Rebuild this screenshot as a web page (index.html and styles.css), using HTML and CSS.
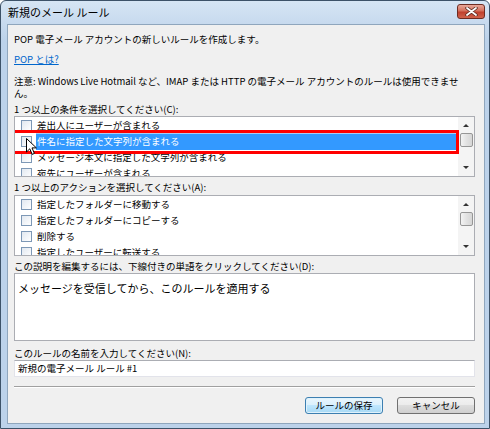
FILE: index.html
```html
<!DOCTYPE html>
<html lang="ja">

<head>
  <meta charset="UTF-8">
  <meta name="viewport" content="width=device-width, initial-scale=1.0">
  <title>新規のメール ルール</title>

  <link rel="stylesheet" href="styles.css">
</head>

<body>
  <div class="window">
    <!-- タイトルバー -->
    <div class="titlebar">
      <span class="title">新規のメール ルール</span>
      <span class="close">
        <svg width="13" height="9" viewBox="0 0 13 9">
          <path d="M2 1 L11 8 M11 1 L2 8" stroke="#5a2a20" stroke-width="3.4" stroke-linecap="round" />
          <path d="M2 1 L11 8 M11 1 L2 8" stroke="#ffffff" stroke-width="1.8" stroke-linecap="round" />
        </svg>
      </span>
    </div>

    <div class="client">
      <p class="intro">POP 電子メール アカウントの新しいルールを作成します。</p>
      <p class="help"><a href="#">POP とは?</a></p>
      <p class="note">注意: Windows Live Hotmail など、IMAP または HTTP の電子メール アカウントのルールは使用できません。</p>

      <!-- 条件 -->
      <div class="label">1 つ以上の条件を選択してください(C):</div>
      <div class="listbox conditions">
        <ul class="items">
          <li><span class="check"></span><span class="text">差出人にユーザーが含まれる</span></li>
          <li class="selected"><span class="check"></span><span class="text">件名に指定した文字列が含まれる</span></li>
          <li><span class="check"></span><span class="text">メッセージ本文に指定した文字列が含まれる</span></li>
          <li><span class="check"></span><span class="text">宛先にユーザーが含まれる</span></li>
        </ul>
        <div class="scrollbar">
          <span class="arrow up"></span>
          <span class="thumb"></span>
          <span class="arrow down"></span>
        </div>
        <span class="mark"></span>
        <svg class="cursor" width="12" height="18" viewBox="0 0 12 18">
          <path d="M0.5 0.5 L0.5 14 L3.8 10.8 L6.2 16.4 L8.4 15.4 L6 9.9 L10.4 9.9 Z" fill="#ffffff" stroke="#000000" stroke-width="1" />
        </svg>
      </div>

      <!-- アクション -->
      <div class="label">1 つ以上のアクションを選択してください(A):</div>
      <div class="listbox actions">
        <ul class="items">
          <li><span class="check"></span><span class="text">指定したフォルダーに移動する</span></li>
          <li><span class="check"></span><span class="text">指定したフォルダーにコピーする</span></li>
          <li><span class="check"></span><span class="text">削除する</span></li>
          <li><span class="check"></span><span class="text">指定したユーザーに転送する</span></li>
        </ul>
        <div class="scrollbar">
          <span class="arrow up"></span>
          <span class="thumb"></span>
          <span class="arrow down"></span>
        </div>
      </div>

      <!-- 説明 -->
      <div class="label">この説明を編集するには、下線付きの単語をクリックしてください(D):</div>
      <div class="desc">メッセージを受信してから、このルールを適用する</div>

      <!-- ルール名 -->
      <div class="label">このルールの名前を入力してください(N):</div>
      <div class="name">新規の電子メール ルール #1</div>

      <hr class="sep">

      <div class="buttons">
        <button class="btn default">ルールの保存</button>
        <button class="btn">キャンセル</button>
      </div>
    </div>
  </div>
</body>

</html>
```

FILE: styles.css
```css
* {
  margin: 0;
  padding: 0;
  box-sizing: border-box;
}

body {
  width: 490px;
  height: 429px;
  overflow: hidden;
  font-family: "Noto Sans CJK JP", "Noto Sans", sans-serif;
  font-size: 9.5px;
  color: #000000;
}

/* ウィンドウ枠 */
.window {
  display: flex;
  flex-direction: column;
  width: 490px;
  height: 429px;
  padding: 0 4px 4px 6px;
  border: 1px solid #3d5268;
  border-radius: 6px 6px 0 0;
  background: linear-gradient(#d6e5f4, #bcd2ea 40px, #bcd2ea);
}

.titlebar {
  display: flex;
  align-items: center;
  justify-content: space-between;
  height: 23px;
  padding-left: 1px;
}

.title {
  font-size: 11px;
  line-height: 23px;
}

.close {
  display: flex;
  align-items: center;
  justify-content: center;
  width: 28px;
  height: 15px;
  margin-top: -3px;
  border: 1px solid #6e2c22;
  border-radius: 3px;
  background: linear-gradient(#e9a899, #d4705c 45%, #c0412e 55%, #d0634c);
}

.client {
  flex: 1;
  padding: 8px 9px 0 6px;
  border: 1px solid #8fa6bd;
  background: #f0f0f0;
}

p,
.label {
  line-height: 12px;
}

.help {
  margin-top: 8px;
}

.help a {
  color: #0066cc;
}

.note {
  margin-top: 10px;
  padding-right: 8px;
}

.label {
  margin-top: 4px;
}

/* リストボックス */
.listbox {
  position: relative;
  display: flex;
  height: 61px;
  margin-top: 1px;
  border: 1px solid #abadb3;
  background: #ffffff;
  overflow: hidden;
}

.actions {
  margin-top: 2px;
}

.items {
  flex: 1;
  list-style: none;
}

.items li {
  display: flex;
  align-items: center;
  height: 16px;
  padding-left: 6px;
}

.check {
  width: 11px;
  height: 11px;
  margin-right: 4px;
  border: 1px solid #7d98b6;
  background: linear-gradient(135deg, #e1e8f0, #ffffff);
}

.text {
  flex: 1;
  height: 16px;
  padding-left: 1px;
  line-height: 16px;
  white-space: nowrap;
}

.selected .text {
  height: 17px;
  border-top: 1px solid #a6cdf5;
  background: #3399ff;
  color: #ffffff;
  line-height: 15px;
}

.scrollbar {
  display: flex;
  flex-direction: column;
  align-items: center;
  width: 16px;
  background: #f4f4f4;
}

.arrow {
  width: 0;
  height: 0;
  border-left: 3px solid transparent;
  border-right: 3px solid transparent;
}

.arrow.up {
  margin-top: 7px;
  border-bottom: 3px solid #333333;
}

.arrow.down {
  margin-top: auto;
  margin-bottom: 7px;
  border-top: 3px solid #333333;
}

.thumb {
  width: 13px;
  height: 14px;
  margin-top: 6px;
  border: 1px solid #969696;
  border-radius: 2px;
  background: linear-gradient(90deg, #f3f3f3, #e2e2e2 50%, #d6d6d6);
}

/* 選択行の赤枠 */
.mark {
  position: absolute;
  left: -5px;
  top: 13px;
  width: 449px;
  height: 24px;
  border: 3px solid #ff0000;
}

.cursor {
  position: absolute;
  left: 11px;
  top: 21px;
}

/* 説明ボックス */
.desc {
  height: 68px;
  margin-top: 1px;
  padding: 7px 3px;
  border: 1px solid #abadb3;
  background: #ffffff;
  font-size: 11px;
  line-height: 15px;
}

.desc + .label {
  margin-top: 6px;
}

.name {
  height: 17px;
  margin-top: 1px;
  padding-left: 3px;
  border: 1px solid #e2e3ea;
  border-top-color: #abadb3;
  background: #ffffff;
  line-height: 15px;
}

.sep {
  margin-top: 9px;
  border: 0;
  border-top: 1px solid #a0a0a0;
  border-bottom: 1px solid #ffffff;
}

.buttons {
  display: flex;
  justify-content: flex-end;
  gap: 14px;
  margin-top: 9px;
}

.btn {
  width: 78px;
  height: 17px;
  border: 1px solid #707070;
  border-radius: 3px;
  background: linear-gradient(#f2f2f2, #ebebeb 50%, #dddddd 50%, #cfcfcf);
  font-family: inherit;
  font-size: 9.5px;
  line-height: 15px;
}

.btn.default {
  border-color: #3c7fb1;
  background: linear-gradient(#eaf6fd, #d9f0fc 50%, #bee6fd 50%, #a7d9f5);
  box-shadow: inset 0 0 0 1px #dff2fc;
}
```
